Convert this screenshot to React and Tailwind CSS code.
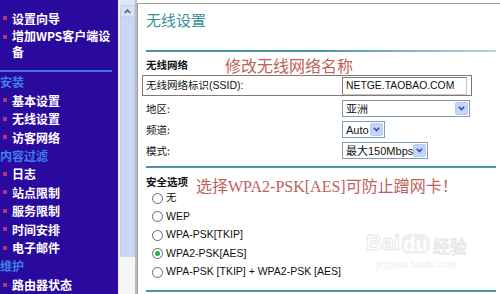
import React from "react";

const cjk = { fontFamily: '"Noto Sans CJK SC", "Liberation Sans", sans-serif' };
const latin = { fontFamily: '"Liberation Sans", "Noto Sans CJK SC", sans-serif' };

function NavItem({ children }) {
  return (
    <div className="h-[19px] flex items-center pl-[3px]">
      <span className="w-[4px] h-[4px] bg-[#b8337f] shrink-0" />
      <span className="ml-[5px] text-white font-bold text-[12px] leading-[15px] whitespace-nowrap">{children}</span>
    </div>
  );
}

function NavItem2() {
  return (
    <div className="flex items-start pl-[3px] py-[1px]">
      <span className="w-[4px] h-[4px] bg-[#b8337f] shrink-0 mt-[7px]" />
      <div className="ml-[5px] text-white font-bold text-[12px] leading-[16px] flex flex-col">
        <span className="whitespace-nowrap">增加WPS客户端设</span>
        <span>备</span>
      </div>
    </div>
  );
}

function NavHead({ children }) {
  return (
    <div className="h-[19px] flex items-center text-[#3f7fe6] font-bold text-[12px]">{children}</div>
  );
}

function Chevron() {
  return (
    <span className="w-[13px] h-[13px] bg-[#c4d5fb] border border-[#b6c9f5] rounded-[2px] flex items-center justify-center mr-[1px] shrink-0">
      <svg width="7" height="5" viewBox="0 0 7 5">
        <path d="M0.8 0.8 L3.5 3.6 L6.2 0.8" fill="none" stroke="#2d4da8" strokeWidth="1.6" />
      </svg>
    </span>
  );
}

function Select({ w, children }) {
  return (
    <div
      className="h-[17px] border border-[#7f9db9] bg-white flex items-center justify-between pl-[3px]"
      style={{ width: w }}
    >
      <span className="text-[11px] text-[#111] leading-none whitespace-nowrap">{children}</span>
      <Chevron />
    </div>
  );
}

function Radio({ checked, children }) {
  return (
    <div className="h-[18.5px] flex items-center pl-[6px]">
      <span className="w-[11px] h-[11px] rounded-full border border-[#5a6b7d] bg-white flex items-center justify-center">
        {checked && <span className="w-[5px] h-[5px] rounded-full bg-[#3aa34a]" />}
      </span>
      <span className="ml-[3px] text-[10.5px] text-[#111] whitespace-nowrap" style={latin}>{children}</span>
    </div>
  );
}

function Row({ label, children }) {
  return (
    <div className="h-[21px] flex items-center">
      <span className="w-[196px] text-[10.5px] text-[#111]">{label}</span>
      {children}
    </div>
  );
}

export default function App() {
  return (
    <div className="w-[500px] h-[294px] overflow-hidden flex bg-white relative" style={cjk}>
      {/* sidebar */}
      <div className="w-[118px] h-full bg-[#2a0a9e] flex flex-col pt-[9px] shrink-0">
        <NavItem>设置向导</NavItem>
        <NavItem2 />
        <div className="mt-[9px] h-[2px] w-[112px] bg-[#3c78e0]" />
        <NavHead>安装</NavHead>
        <NavItem>基本设置</NavItem>
        <NavItem>无线设置</NavItem>
        <NavItem>访客网络</NavItem>
        <NavHead>内容过滤</NavHead>
        <NavItem>日志</NavItem>
        <NavItem>站点限制</NavItem>
        <NavItem>服务限制</NavItem>
        <NavItem>时间安排</NavItem>
        <NavItem>电子邮件</NavItem>
        <NavHead>维护</NavHead>
        <NavItem>路由器状态</NavItem>
      </div>

      {/* scrollbar */}
      <div className="w-[19px] h-full flex shrink-0">
        <div className="w-[2px] bg-[#eef0f6]" />
        <div className="w-[15px] flex flex-col bg-[#f3f4f6]">
          <div className="h-[5px] bg-[#dfe6f4]" />
          <div className="h-[12px] bg-[#d6e0f5] border border-[#c2cfee] flex items-center justify-center">
            <svg width="7" height="5" viewBox="0 0 7 5">
              <path d="M0.8 4 L3.5 1.2 L6.2 4" fill="none" stroke="#4a5f8f" strokeWidth="1.5" />
            </svg>
          </div>
          <div className="h-[240px] bg-[#c9d6f6] border-x border-[#bccbf0]" />
          <div className="flex-1 bg-[#f6f6f6]" />
        </div>
        <div className="w-[2px] bg-[#b9bcc2]" />
      </div>

      {/* main */}
      <div className="flex-1 mt-[3px] border-l border-t border-[#9c9c9c] pl-[8px] pr-[4px] flex flex-col">
        <div className="h-[30px] flex items-center text-[15px] text-[#3b8e9c] mt-[1px]">无线设置</div>
        <div className="mt-[15px] h-[2px] bg-gradient-to-r from-[#4b97a6] via-[#4b97a6] to-[#b8d6da]" />
        <div className="h-[21px] flex items-center mt-[2px]">
          <span className="text-[10.5px] font-bold text-[#111] w-[79px]">无线网络</span>
          <span className="text-[16px] text-[#bd625b]">修改无线网络名称</span>
        </div>
        <div className="-ml-[4px] w-[330px] h-[21px] border border-[#8b7474] flex items-center pl-[3px]">
          <span className="w-[196px] text-[10.5px] text-[#111]">
            无线网络标识<span style={latin}>(SSID):</span>
          </span>
          <div className="w-[125px] h-[18px] border border-[#7c7c7c] border-r-[#c8c8c8] border-b-[#c8c8c8] flex items-center pl-[3px]">
            <span className="text-[10.4px] text-[#111]" style={latin}>NETGE.TAOBAO.COM</span>
          </div>
        </div>
        <div className="mt-[2px]">
          <Row label="地区:">
            <Select w={128}>亚洲</Select>
          </Row>
          <Row label="频道:">
            <Select w={43}><span style={latin}>Auto</span></Select>
          </Row>
          <Row label="模式:">
            <Select w={86}>最大<span style={latin}>150Mbps</span></Select>
          </Row>
        </div>
        <div className="mt-[5px] h-[2px] bg-[#4b97a6]" />
        <div className="h-[18px] flex items-start mt-[7px]">
          <span className="text-[10.5px] font-bold text-[#111] w-[50px] leading-[14px]">安全选项</span>
          <span className="text-[16px] text-[#bd625b] mt-[1px] leading-[18px] whitespace-nowrap">
            选择<span style={{ fontFamily: '"Liberation Serif", serif' }}>WPA2-PSK[AES]</span>可防止蹭网卡！
          </span>
        </div>
        <div className="-mt-[4px]">
          <Radio>无</Radio>
          <Radio>WEP</Radio>
          <Radio>WPA-PSK[TKIP]</Radio>
          <Radio checked>WPA2-PSK[AES]</Radio>
          <Radio>WPA-PSK [TKIP] + WPA2-PSK [AES]</Radio>
        </div>
        <div className="mt-[8px] h-[2px] bg-[#4b97a6]" />
      </div>

      {/* baidu watermark */}
      <div className="absolute left-[366px] top-[232px] flex flex-col items-center opacity-50 pointer-events-none">
        <div className="flex items-end">
          <span className="text-[22px] leading-none font-bold text-white" style={{ ...latin, WebkitTextStroke: "1px #d2d2d2" }}>Bai</span>
          <span className="text-[20px] leading-none font-bold text-white ml-[1px] px-[2px] rounded-[8px] bg-[#e0e0e0]" style={latin}>du</span>
          <span className="text-[17px] leading-none ml-[3px] text-white" style={{ WebkitTextStroke: "1px #d0d0d0" }}>经验</span>
        </div>
        <span className="text-[10px] text-[#dddddd] mt-[3px]" style={latin}>jingyan.baidu.com</span>
      </div>
    </div>
  );
}
